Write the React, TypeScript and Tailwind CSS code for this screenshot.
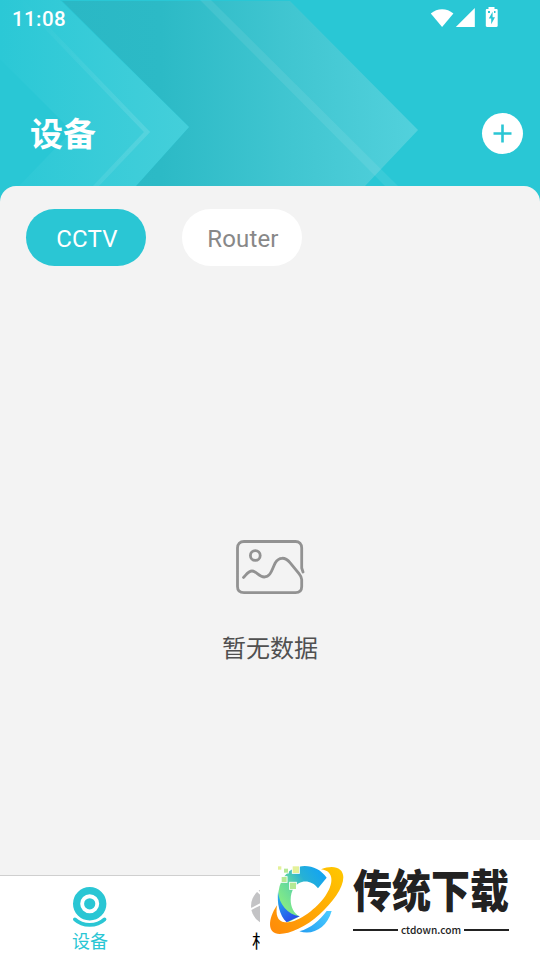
import type { ReactNode } from "react";

function HeaderPattern() {
  return (
    <svg
      className="absolute inset-0"
      width="540"
      height="206"
      viewBox="0 0 540 206"
      fill="none"
    >
      <defs>
        <linearGradient id="chevronLeft" x1="0" y1="0" x2="190" y2="0" gradientUnits="userSpaceOnUse">
          <stop stopColor="#2bc8d6" />
          <stop offset="1" stopColor="#44cfda" />
        </linearGradient>
        <linearGradient id="chevronRight" x1="62" y1="0" x2="418" y2="0" gradientUnits="userSpaceOnUse">
          <stop stopColor="#2ab8c5" />
          <stop offset="0.28" stopColor="#2cbac6" />
          <stop offset="0.65" stopColor="#41c6d1" />
          <stop offset="1" stopColor="#52d1dc" />
        </linearGradient>
        <linearGradient id="thinLeft" x1="20" y1="0" x2="150" y2="0" gradientUnits="userSpaceOnUse">
          <stop stopColor="#fff" stopOpacity="0" />
          <stop offset="1" stopColor="#fff" stopOpacity="0.12" />
        </linearGradient>
      </defs>
      <path d="M62 1H290L418 130L365 186H136L189 127Z" fill="url(#chevronRight)" />
      <path d="M0 0H60L189 127L135 187H18L72 131L0 59Z" fill="url(#chevronLeft)" />
      <path d="M20 0L147 132L94 188" stroke="url(#thinLeft)" strokeWidth="4.5" />
      <path d="M200 0H211L398 186H385Z" fill="#fff" fillOpacity="0.08" />
    </svg>
  );
}

function StatusBar() {
  return (
    <div className="relative flex h-9 items-center justify-between pl-3 pr-[41px] text-white">
      <span className="pt-[2px] text-[20.5px] leading-none font-medium tracking-[0.4px]">
        11:08
      </span>
      <svg width="69" height="22" viewBox="0 0 69 22" fill="#fff">
        <path d="M0.8 6.4C7.2.7 17 .7 23.4 6.4L12.1 20Z" />
        <path d="M44.8 1V20H25.8Z" />
        <path
          fillRule="evenodd"
          d="M58.5 0H64.5V2H66.5C67.2 2 67.7 2.5 67.7 3.2V18.8C67.7 19.5 67.2 20 66.5 20H57C56.3 20 55.8 19.5 55.8 18.8V3.2C55.8 2.5 56.3 2 57 2H58.5ZM58 4V6H60V4ZM64 4V6H65.5V4ZM62.6 4.7L58.8 11.6H61.2V17.2L65 10.2H62.6Z"
        />
      </svg>
    </div>
  );
}

function EmptyIcon() {
  return (
    <svg
      width="72"
      height="58"
      viewBox="0 0 72 58"
      fill="none"
      stroke="#929292"
      strokeWidth="2.8"
      strokeLinecap="round"
      strokeLinejoin="round"
    >
      <path d="M68 33L66.7 29V9C66.7 5 64.3 2.5 60.5 2.5H9C5 2.5 2.5 5 2.5 9V47.5C2.5 51.5 5 53.6 9 53.6H60.5C64.3 53.6 66.7 51.5 66.7 47.5V40.5C66.7 37.8 65.3 36.3 63.8 34.4L55 23.7C50.3 17.7 43.7 17.8 40.2 24C37.2 29.5 36 38 29.2 38C24 38 21.5 32 17 32C13.4 32 10.8 36.2 8.5 38.4" />
      <circle cx="20.3" cy="16.5" r="4.9" />
    </svg>
  );
}

function CameraIcon() {
  return (
    <svg width="37" height="42" viewBox="0 0 37 42" fill="none">
      <circle cx="17.7" cy="16.8" r="13.1" stroke="#2ac6d4" strokeWidth="7.2" />
      <circle cx="17.7" cy="16.8" r="5.6" fill="#2ac6d4" />
      <path
        d="M2.9 32.4C10.7 39.8 24.7 39.8 32.5 32.4"
        stroke="#2ac6d4"
        strokeWidth="3.8"
        strokeLinecap="round"
      />
    </svg>
  );
}

function ApertureIcon() {
  return (
    <svg width="40" height="42" viewBox="0 0 40 42" fill="none">
      <circle cx="20" cy="19" r="19" fill="#c3c3c5" />
      <path
        d="M0 22.5L12 16.5M4.5 1L16 12M22 0L19 12M40 16L28 22M35 37L24 26M18 40L21 27"
        stroke="#fff"
        strokeWidth="2"
      />
      <circle cx="20" cy="19" r="7" fill="#fff" />
    </svg>
  );
}

function SwooshLogo() {
  return (
    <svg width="80" height="75" viewBox="138 81 240 225">
      <defs>
        <linearGradient id="ringTop" x1="180" y1="220" x2="312" y2="130" gradientUnits="userSpaceOnUse">
          <stop stopColor="#8cf07f" />
          <stop offset="0.4" stopColor="#62d7a0" />
          <stop offset="0.68" stopColor="#27b1d5" />
          <stop offset="1" stopColor="#15a5ef" />
        </linearGradient>
        <linearGradient id="ringBase" x1="175" y1="190" x2="220" y2="255" gradientUnits="userSpaceOnUse">
          <stop stopColor="#23a8ee" />
          <stop offset="1" stopColor="#294bea" />
        </linearGradient>
        <linearGradient id="ringTail" x1="245" y1="292" x2="330" y2="230" gradientUnits="userSpaceOnUse">
          <stop stopColor="#259ff2" />
          <stop offset="1" stopColor="#4acbff" />
        </linearGradient>
        <linearGradient id="orbit" x1="155" y1="290" x2="365" y2="100" gradientUnits="userSpaceOnUse">
          <stop stopColor="#ff8b09" />
          <stop offset="1" stopColor="#ffc700" />
        </linearGradient>
      </defs>
      <path
        d="M320 128C290 84 226 80 193 124C163 167 171 231 205 262L239 244C210 230 205 186 221 160C236 135 272 131 294 160Z"
        fill="url(#ringTop)"
      />
      <path d="M174 170C178 208 202 238 239 244L200 262C178 240 171 205 174 170Z" fill="url(#ringBase)" />
      <path d="M238 289C274 279 298 257 320 228L335 228C320 279 279 302 238 289Z" fill="url(#ringTail)" />
      <path
        d="M303 103C339 88 370 97 370 127C370 160 337 203 299 238C258 276 209 297 179 297C142 297 142 254 171 211C167 238 171 260 195 262C238 264 291 218 316 183C340 149 345 108 303 103Z"
        fill="url(#orbit)"
      />
      <g stroke="#fff" strokeWidth="5" paintOrder="stroke">
        <rect x="174" y="94" width="10" height="10" fill="#e4f199" />
        <rect x="192" y="101" width="12" height="12" fill="#b5e994" />
        <rect x="218" y="94" width="19" height="20" fill="#e4f199" />
        <rect x="185" y="126" width="15" height="15" fill="#b5e994" />
        <rect x="210" y="143" width="18" height="19" fill="#b5e994" />
      </g>
    </svg>
  );
}

function Tab({ icon, label, active }: { icon: ReactNode; label: string; active?: boolean }) {
  return (
    <div className="flex w-[180px] flex-col items-center pt-[11px]">
      {icon}
      <span
        className={`mt-px text-[18px] leading-6 ${active ? "text-[#2ac6d4]" : "text-black"}`}
      >
        {label}
      </span>
    </div>
  );
}

export default function App() {
  return (
    <div className="relative flex h-[960px] w-[540px] flex-col overflow-hidden bg-[#29c7d5] font-['Roboto','Noto_Sans_CJK_SC',sans-serif]">
      {/* Header */}
      <HeaderPattern />
      <StatusBar />
      <header className="relative flex h-[150px] items-center justify-between pt-[45px] pl-[30px] pr-[17px]">
        <h1 className="pt-px text-[33px] leading-none font-bold text-white">设备</h1>
        <button className="flex size-[41px] items-center justify-center rounded-full bg-white">
          <svg width="19" height="19" viewBox="0 0 19 19" stroke="#2ac6d4" strokeWidth="2.6">
            <path d="M9.5 .5V18.5M.5 9.5H18.5" />
          </svg>
        </button>
      </header>

      {/* Content */}
      <main className="relative flex flex-1 flex-col rounded-t-[16px] bg-[#f3f3f3] pt-[23px]">
        <div className="flex gap-9 pl-[26px] text-[24px] tracking-[0.15px]">
          <button className="h-[57px] w-[120px] rounded-full bg-[#2ac6d4] pt-[3px] pl-[2px] text-white">
            CCTV
          </button>
          <button className="h-[57px] w-[120px] rounded-full bg-white pt-[3px] pl-[2px] text-[#888]">
            Router
          </button>
        </div>
        <div className="flex flex-col items-center pt-[273px]">
          <div className="pl-[2px]">
            <EmptyIcon />
          </div>
          <p className="mt-[34px] text-[24px] leading-9 text-[#505050]">暂无数据</p>
        </div>
      </main>

      {/* Bottom tabs */}
      <nav className="relative flex h-[85px] border-t border-[#cfcfcf] bg-white">
        <Tab icon={<CameraIcon />} label="设备" active />
        <Tab icon={<ApertureIcon />} label="相册" />
      </nav>

      {/* Site badge */}
      <div className="absolute right-0 bottom-0 flex h-[120px] w-[280px] bg-white pt-[22px] pl-[6px]">
        <SwooshLogo />
        <div className="ml-[7px] w-[156px] text-[#222]">
          <div className="mb-[18px] h-[42px] origin-top scale-y-[1.16] text-[39px] leading-[46px] font-black whitespace-nowrap font-['Noto_Sans_CJK_SC',sans-serif]">
            传统下载
          </div>
          <div className="flex items-center gap-[3px]">
            <span className="h-[2px] flex-1 bg-[#222]" />
            <span className="text-[10.2px] leading-4 font-medium font-['Noto_Sans_CJK_SC',sans-serif]">
              ctdown.com
            </span>
            <span className="h-[2px] flex-1 bg-[#222]" />
          </div>
        </div>
      </div>
    </div>
  );
}
